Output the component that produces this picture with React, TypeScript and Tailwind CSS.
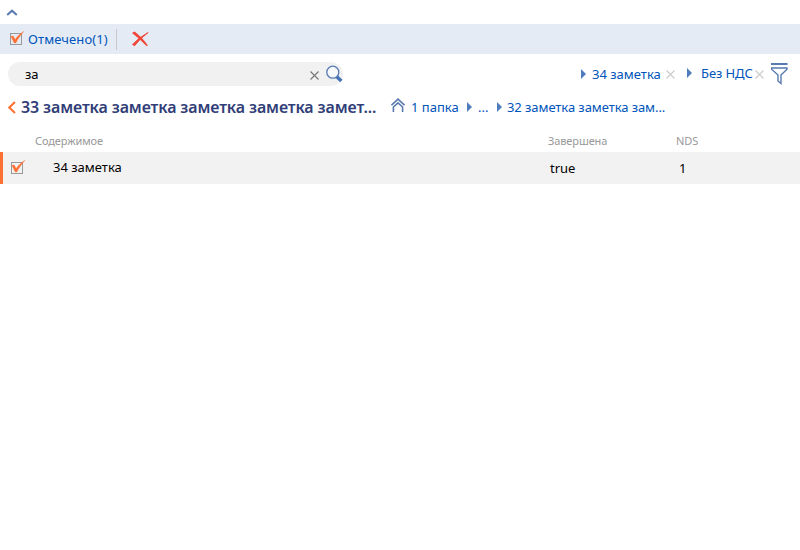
import React from "react";

const Check = () => (
  <svg width="16" height="16" viewBox="0 0 16 16" className="block shrink-0" fill="none">
    <rect x="1.5" y="3.5" width="11" height="11" stroke="#999" />
    <path d="M1.8 6.3 4.2 6.1l2 3.5C8 6.5 11 3.6 15 1.2 11.5 5.5 8.8 9 6.9 13H5.2Z" fill="#ff7033" stroke="#ff7033" strokeWidth=".3" />
  </svg>
);

const Arrow = () => (
  <svg width="5" height="10" viewBox="0 0 5 10" className="block shrink-0">
    <path d="M0 0 5 5 0 10Z" fill="#4f7cbc" />
  </svg>
);

const Cross = ({ color }: { color: string }) => (
  <svg width="9" height="9" viewBox="0 0 9 9" className="block shrink-0">
    <path d="M.5.5l8 8M8.5.5l-8 8" stroke={color} strokeWidth="1.1" fill="none" />
  </svg>
);

export default function App() {
  return (
    <div className="h-[550px] w-[800px] overflow-hidden bg-white font-['Noto_Sans',sans-serif] text-[13px] leading-5 whitespace-nowrap text-[#0055bb]">
      <div className="flex h-6 pt-[9px] pl-1.5">
        <svg width="12" height="7" viewBox="0 0 12 7" fill="none">
          <path d="M1.2 6 6 1.7 10.8 6" stroke="#587ab0" strokeWidth="2" />
        </svg>
      </div>

      <div className="flex h-[30px] items-center bg-[#e5ebf5] pl-[9px]">
        <div className="-mt-0.5"><Check /></div>
        <span className="ml-[3px] w-[88px] tracking-[0.1px]">Отмечено(1)</span>
        <div className="h-[21px] w-px bg-[#c8c8c8]" />
        <svg width="17" height="16" viewBox="0 0 17 16" className="ml-[15px]" fill="#ef4537">
          <path d="M0 2 2.5 .5Q10 6 16 14.5L14.5 15Q8 8 0 2Z" />
          <path d="M0 13.5Q7 6 16 1L16.5 1.7Q9 7 2.5 15.3Z" />
        </svg>
      </div>

      <div className="flex h-[38px] pt-2 pl-2">
        <div className="flex h-6 w-[335px] items-center rounded-full bg-[#f1f1f1] pl-[17px] text-black">
          <span className="w-[285px]">за</span>
          <div className="mt-0.5"><Cross color="#777" /></div>
          <svg width="18" height="18" viewBox="0 0 18 18" className="ml-1.5 shrink-0" fill="none">
            <circle cx="7.8" cy="7.2" r="6" fill="#f7fafd" stroke="#587ab0" strokeWidth="1.3" />
            <path d="m11.8 11.7 4.6 4.3" stroke="#4673b5" strokeWidth="3.4" />
          </svg>
        </div>
        <div className="ml-[238px] flex h-6 items-center">
          <Arrow />
          <span className="ml-1.5 w-[74px]">34 заметка</span>
          <Cross color="#ccc" />
          <div className="-mt-0.5 ml-3"><Arrow /></div>
          <span className="-mt-0.5 ml-[9px] w-[54px] tracking-[-0.1px]">Без НДС</span>
          <Cross color="#ccc" />
          <svg width="17" height="22" viewBox="0 0 17 22" className="ml-[7px]" fill="none" stroke="#587ab0">
            <path d="M0 1h16.5" strokeWidth="2" />
            <path d="M.5 5h15.5v1.2L10 12v8.5L7 18V12L.6 6.2Z" strokeWidth="1.4" />
          </svg>
        </div>
      </div>

      <div className="flex h-8 items-center pb-0.5 pl-2">
        <svg width="8" height="13" viewBox="0 0 8 13" fill="none">
          <path d="M7 1 1.3 6.5 7 12" stroke="#ff7033" strokeWidth="2" />
        </svg>
        <span className="ml-[5px] w-[370px] text-[16px] font-semibold tracking-[-0.13px] text-[#313e78]">33 заметка заметка заметка заметка замет...</span>
        <svg width="14" height="14" viewBox="0 0 14 14" fill="none" stroke="#587ab0" strokeWidth="1.6" className="mb-1">
          <path d="m.5 7.2 6.5-6 6.5 6M2.4 14V9L7 4.8 11.6 9v5" />
        </svg>
        <span className="ml-1.5 w-14">1 папка</span>
        <Arrow />
        <span className="ml-1.5 w-[19px]">...</span>
        <Arrow />
        <span className="ml-[5px] tracking-[-0.07px]">32 заметка заметка зам...</span>
      </div>

      <div className="flex h-7 items-center pt-1.5 pl-[35px] text-[11px] tracking-[-0.1px] text-[#999]">
        <span className="w-[513px]">Содержимое</span>
        <span className="w-32">Завершена</span>
        <span>NDS</span>
      </div>

      <div className="flex h-8 items-center border-l-[3px] border-[#ff7033] bg-[#f2f2f2] pl-[7px] text-black">
        <div className="-mt-0.5"><Check /></div>
        <span className="-mt-0.5 ml-[27px] w-[497px]">34 заметка</span>
        <span className="w-[129px]">true</span>
        <span>1</span>
      </div>
    </div>
  );
}
